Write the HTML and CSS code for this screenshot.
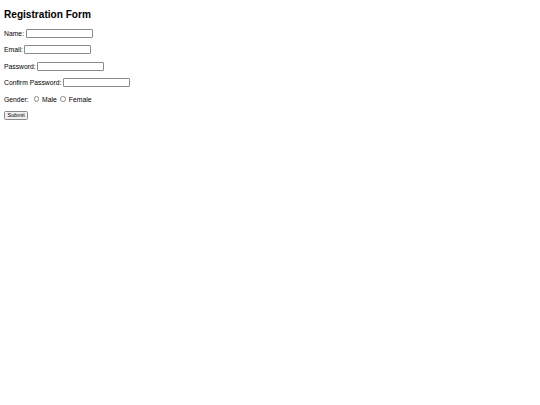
FILE: index.html
```html
<!DOCTYPE html>
<html>
<head>
<meta charset="utf-8">
<title>Registration Form</title>
<link rel="stylesheet" href="styles.css">
</head>
<body>
<h2 class="title">Registration Form</h2>
<form class="form">
  <div class="row"><label class="label">Name:</label><input class="field" type="text"></div>
  <div class="row"><label class="label">Email:</label><input class="field" type="email"></div>
  <div class="row"><label class="label">Password:</label><input class="field" type="password"></div>
  <div class="row"><label class="label">Confirm Password:</label><input class="field" type="password"></div>
  <div class="row"><span class="label">Gender:</span><span class="radio"></span><span class="opt">Male</span><span class="radio"></span><span class="opt">Female</span></div>
  <div class="row"><button class="submit" type="button">Submit</button></div>
</form>
</body>
</html>
```
FILE: styles.css
```css
html, body {
  margin: 0;
  padding: 0;
  background: #fff;
}
body {
  padding: 0 4px;
  font-family: "Liberation Sans", Arial, sans-serif;
  font-size: 6.8px;
  color: #000;
}
.title {
  margin: 9px 0 0;
  font-size: 10.1px;
  line-height: 12px;
  font-weight: bold;
}
.form {
  display: flex;
  flex-direction: column;
  gap: 7.5px;
  margin-top: 7.5px;
}
.row {
  display: flex;
  align-items: center;
  height: 9px;
}
.label {
  margin-right: 1.5px;
}
.field {
  box-sizing: border-box;
  width: 67px;
  height: 9px;
  margin: 0;
  padding: 0;
  border: 1px solid #8a8a8a;
  border-radius: 1px;
  background: #fff;
}
.radio {
  box-sizing: border-box;
  width: 5.5px;
  height: 5.5px;
  border: 0.6px solid #8a8a8a;
  border-radius: 50%;
  margin: 0 3px 0 3.5px;
}
.submit {
  box-sizing: border-box;
  height: 9px;
  padding: 0 2.5px;
  margin: 0;
  font-family: "Liberation Sans", Arial, sans-serif;
  font-size: 5.6px;
  line-height: 7px;
  color: #000;
  background: #efefef;
  border: 0.8px solid #8a8a8a;
  border-radius: 1.5px;
}
```
